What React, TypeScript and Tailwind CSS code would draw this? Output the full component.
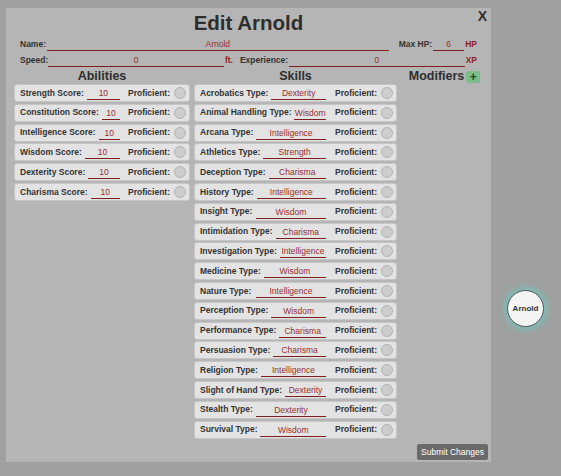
import React from "react";

const abilities = [
	{ name: "Strength", value: "10" },
	{ name: "Constitution", value: "10" },
	{ name: "Intelligence", value: "10" },
	{ name: "Wisdom", value: "10" },
	{ name: "Dexterity", value: "10" },
	{ name: "Charisma", value: "10" },
];

const skills = [
	["Acrobatics", "Dexterity"],
	["Animal Handling", "Wisdom"],
	["Arcana", "Intelligence"],
	["Athletics", "Strength"],
	["Deception", "Charisma"],
	["History", "Intelligence"],
	["Insight", "Wisdom"],
	["Intimidation", "Charisma"],
	["Investigation", "Intelligence"],
	["Medicine", "Wisdom"],
	["Nature", "Intelligence"],
	["Perception", "Wisdom"],
	["Performance", "Charisma"],
	["Persuasion", "Charisma"],
	["Religion", "Intelligence"],
	["Slight of Hand", "Dexterity"],
	["Stealth", "Dexterity"],
	["Survival", "Wisdom"],
];

function Field({ value, className }: { value: string; className: string }) {
	return (
		<div
			className={
				"min-w-0 border-b-[1.5px] border-[#7d1f1f] text-center font-normal text-[8.5px] text-[#943030] overflow-hidden whitespace-nowrap " +
				className
			}
		>
			{value}
		</div>
	);
}

function Proficient() {
	return (
		<>
			<span className="ml-[8px] shrink-0 font-bold">Proficient:</span>
			<span className="ml-[4px] w-[12px] h-[12px] shrink-0 rounded-full bg-[#cdcdcd] border border-[#b3b3b3]" />
		</>
	);
}

function Card({ children }: { children: React.ReactNode }) {
	return (
		<div className="h-[18px] flex items-center pl-[5px] pr-[3px] bg-[#e3e3e3] border border-[#c6c6c6] rounded-[3px] text-[8.5px] text-[#333] whitespace-nowrap">
			{children}
		</div>
	);
}

export default function App() {
	return (
		<div className="relative w-[561px] h-[476px] bg-[#a0a0a0] pt-[8px] pl-[6px] font-['Liberation_Sans',Arial,sans-serif] text-[#333]">
			<div className="relative w-[485px] h-[454px] bg-[#b5b5b5] flex flex-col">
				<span className="absolute right-[4px] top-0 text-[14px] leading-[16px] font-bold text-[#2e2e2e]">
					X
				</span>
				<h1 className="pt-[4px] text-center text-[20.5px] leading-[22px] font-bold text-[#2e2e2e]">
					Edit Arnold
				</h1>

				<div className="mt-[3px] px-[14px] flex items-end h-[14px] text-[8.5px] font-bold">
					<span className="leading-[12px] pb-[1px]">Name:</span>
					<Field value="Arnold" className="flex-1 ml-[1px] h-[14px] leading-[14px]" />
					<span className="ml-[10px] leading-[12px] pb-[1px]">Max HP:</span>
					<Field value="6" className="w-[31px] ml-[1px] h-[14px] leading-[14px]" />
					<span className="ml-[1px] leading-[12px] pb-[1px] text-[#8e1f1f]">HP</span>
				</div>

				<div className="mt-[2px] px-[14px] flex items-end h-[14px] text-[8.5px] font-bold">
					<span className="leading-[12px] pb-[1px]">Speed:</span>
					<Field value="0" className="flex-1 h-[14px] leading-[14px]" />
					<span className="ml-[1px] leading-[12px] pb-[1px] text-[#8e1f1f]">ft.</span>
					<span className="ml-[7px] leading-[12px] pb-[1px]">Experience:</span>
					<Field value="0" className="flex-1 ml-[1px] h-[14px] leading-[14px]" />
					<span className="ml-[1px] leading-[12px] pb-[1px] text-[#8e1f1f]">XP</span>
				</div>

				<div className="px-[8px] flex items-start">
					<div className="w-[176px]">
						<h2 className="pt-[2px] text-center text-[12.5px] leading-[15px] font-bold text-[#2e2e2e]">
							Abilities
						</h2>
						<div className="flex flex-col gap-[1.8px]">
							{abilities.map((a) => (
								<Card key={a.name}>
									<span className="shrink-0 font-bold">{a.name} Score:</span>
									<div className="flex-1 min-w-0 flex justify-end pl-[3px]">
										<Field value={a.value} className="w-[35px] h-[13px] leading-[12px] mt-[1px]" />
									</div>
									<Proficient />
								</Card>
							))}
						</div>
					</div>

					<div className="ml-[4px] w-[203px]">
						<h2 className="pt-[2px] text-center text-[12.5px] leading-[15px] font-bold text-[#2e2e2e]">
							Skills
						</h2>
						<div className="flex flex-col gap-[1.8px]">
							{skills.map(([s, t]) => (
								<Card key={s}>
									<span className="shrink-0 font-bold">{s} Type:</span>
									<div className="flex-1 min-w-0 flex justify-end pl-[3px]">
										<Field value={t} className="w-[70px] h-[13px] leading-[12px] mt-[1px]" />
									</div>
									<span className="w-[1px]" />
									<Proficient />
								</Card>
							))}
						</div>
					</div>

					<div className="ml-[3px] flex-1 flex justify-center pl-[6px] pt-[2px]">
						<h2 className="text-[12.5px] leading-[15px] font-bold text-[#2e2e2e]">
							Modifiers
						</h2>
						<button className="ml-[2px] mt-[2px] w-[14px] h-[12px] rounded-[2px] bg-[#7dbd88] text-[#1f4a26] text-[12px] leading-[12px] font-bold flex items-center justify-center">
							+
						</button>
					</div>
				</div>

				<div className="mt-auto flex justify-end pr-[3px] pb-[2px]">
					<button className="h-[16px] w-[71px] rounded-[2px] bg-[#6a6a6a] text-white text-[8.5px] leading-[16px] text-center">
						Submit Changes
					</button>
				</div>
			</div>

			<div className="absolute left-[507px] top-[290px] w-[37px] h-[37px] rounded-full bg-[#f4f4f4] border border-[#555] shadow-[0_0_6px_3px_rgba(110,200,190,0.75)] flex items-center justify-center text-[8px] font-bold text-[#333]">
				Arnold
			</div>
		</div>
	);
}
